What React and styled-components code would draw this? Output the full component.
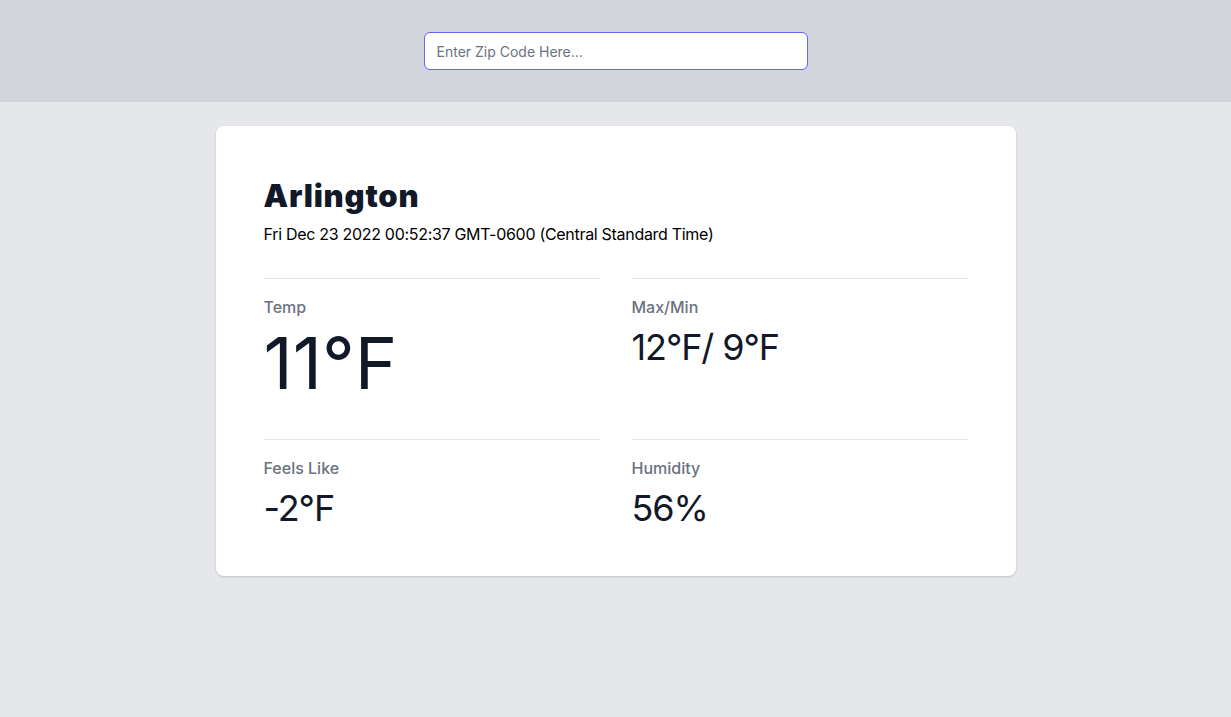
import React from "react";
import styled, { createGlobalStyle } from "styled-components";

const Global = createGlobalStyle`
  html, body { margin: 0; padding: 0; }
  body {
    background: #e5e7eb;
    font-family: Inter, "Noto Sans", sans-serif;
    min-height: 100vh;
  }
  * { box-sizing: border-box; }
`;

const Header = styled.header`
  background: #d1d5db;
  padding: 32px 0;
  display: flex;
  justify-content: center;
`;

const ZipInput = styled.input`
  width: 384px;
  height: 38px;
  padding: 8px 12px;
  border: 1px solid #6366f1;
  border-radius: 6px;
  background: #fff;
  font-family: inherit;
  font-size: 14px;
  line-height: 20px;
  color: #111827;
  outline: none;
  &::placeholder { color: #6b7280; }
`;

const Main = styled.main`
  display: flex;
  justify-content: center;
  padding-top: 24px;
`;

const Card = styled.section`
  width: 800px;
  background: #fff;
  border-radius: 8px;
  box-shadow: 0 1px 3px rgba(0,0,0,0.1), 0 1px 2px rgba(0,0,0,0.06);
  padding: 52px 48px 48px;
`;

const City = styled.h1`
  margin: 0;
  font-size: 31px;
  line-height: 36px;
  font-weight: 900;
  letter-spacing: 0.8px;
  color: #111827;
`;

const DateLine = styled.p`
  margin: 8px 0 0;
  font-size: 16px;
  line-height: 24px;
  letter-spacing: -0.3px;
  color: #000;
`;

const Stats = styled.dl`
  margin: 32px 0 0;
  display: grid;
  grid-template-columns: 1fr 1fr;
  column-gap: 32px;
  row-gap: 40px;
`;

const Stat = styled.div`
  border-top: 1px solid #e5e7eb;
  padding-top: 16px;
`;

const Label = styled.dt`
  font-size: 16px;
  line-height: 24px;
  font-weight: 500;
  color: #6b7280;
`;

const Value = styled.dd`
  margin: 8px 0 0;
  color: #111827;
  font-size: ${p => (p.$big ? "72px" : "36px")};
  line-height: ${p => (p.$big ? "72px" : "40px")};
  font-weight: 400;
  letter-spacing: ${p => (p.$big ? "0" : "-1.1px")};
`;

export default function App() {
  return (
    <>
      <Global />
      <Header>
        <ZipInput placeholder="Enter Zip Code Here..." />
      </Header>
      <Main>
        <Card>
          <City>Arlington</City>
          <DateLine>Fri Dec 23 2022 00:52:37 GMT-0600 (Central Standard Time)</DateLine>
          <Stats>
            <Stat>
              <Label>Temp</Label>
              <Value $big>11°F</Value>
            </Stat>
            <Stat>
              <Label>Max/Min</Label>
              <Value>12°F/ 9°F</Value>
            </Stat>
            <Stat>
              <Label>Feels Like</Label>
              <Value>-2°F</Value>
            </Stat>
            <Stat>
              <Label>Humidity</Label>
              <Value>56%</Value>
            </Stat>
          </Stats>
        </Card>
      </Main>
    </>
  );
}
